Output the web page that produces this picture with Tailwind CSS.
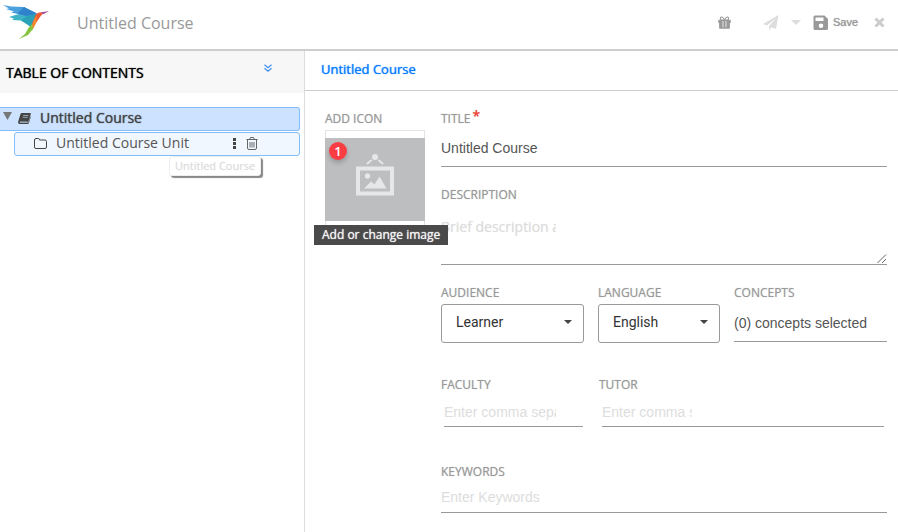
<!DOCTYPE html>
<html lang="en">
<head>
<meta charset="utf-8">
<meta name="viewport" content="width=device-width, initial-scale=1">
<title>Untitled Course</title>
<script src="https://cdn.jsdelivr.net/npm/@tailwindcss/browser@4"></script>
</head>
<body class="flex min-h-screen flex-col overflow-hidden bg-white font-['Open_Sans',sans-serif] text-[#444]">

<header class="flex items-center border-b-2 border-[#cecece] pr-[13px] pb-2">
  <a href="#" aria-label="Home" class="pt-[5px] pl-[3px]">
    <svg width="47" height="36" viewBox="0 0 47 36">
      <path d="M0 0 L8 1.500 L21 2 L33 8 L27 12 L20 10 L8 7.500 L11 6.500 L3 4 L6 3.500 Z" fill="#4a9fdd"/>
      <path d="M21 2 L33 8 L35 10 L24 12 L14 9 Z" fill="#2f83cd"/>
      <path d="M6 12 L14 9.500 L24 11 L34 9 L32 15 L29 21 L18 15.500 L9 15 L11 13.500 Z" fill="#3db3c6"/>
      <path d="M18 15.500 L24 11 L34 9 L31 17 L28 22 Z" fill="#2ba2b8"/>
      <path d="M33 9 L36 7.500 L41 7 L37 12 L33 18 L30 23 L29 19 Z" fill="#ee5a32"/>
      <path d="M31 15 L34 10 L33 18 L30 24 L27 26 Z" fill="#f58b2e"/>
      <path d="M29 19 L30 24 L25 30 L16 34 L22 29 L26 22 Z" fill="#86c440"/>
      <path d="M38 7.200 L46 6 L40 9.500Z" fill="#a9529e"/>
    </svg>
  </a>
  <h1 class="ml-[27px] flex-1 pt-1 text-base text-[#999]">Untitled Course</h1>
  <div class="flex items-center pt-1 text-[#999]">
    <button aria-label="Gift" class="mr-8">
      <svg width="13" height="13" viewBox="0 0 14 14" fill="currentColor"><path fill-rule="evenodd" d="M7 3.400C6.200 1.600 5.200.5 4 .5 2.600.5 2 1.400 2 2.300 2 3 2.300 3.600 2.800 4H1C.5 4 .3 4.200.3 4.700V7.600H1.200V12.800C1.200 13.300 1.500 13.600 2 13.600H12C12.500 13.600 12.800 13.300 12.800 12.800V7.600H13.700V4.700C13.700 4.200 13.500 4 13 4H11.200C11.700 3.600 12 3 12 2.300 12 1.400 11.400.5 10 .5 8.800.5 7.800 1.600 7 3.400ZM6 3.800H4.200C2.800 3.800 2.900 1.700 4.100 1.700 4.900 1.700 5.500 2.700 6 3.800ZM8 3.800H9.800C11.200 3.800 11.100 1.700 9.900 1.700 9.100 1.700 8.500 2.700 8 3.800ZM5 5.500H5.800V12H5ZM8.200 5.500H9V12H8.200Z"/></svg>
    </button>
    <button aria-label="Publish" class="mr-3 text-[#ddd]">
      <svg width="16" height="15" viewBox="0 0 16 15" fill="currentColor"><path d="M15.500 0 0 9 4 10.500 13 3.200 6 11.300V15L8.500 12.200 13 14Z"/></svg>
    </button>
    <button aria-label="Publish options" class="mr-3 text-[#ddd]">
      <svg width="10" height="5" viewBox="0 0 10 5" fill="currentColor"><path d="M0 0H10L5 5Z"/></svg>
    </button>
    <button class="flex items-center gap-1 font-['Liberation_Sans',sans-serif] text-[11px] [text-shadow:0_0_1px_#999]">
      <svg width="16" height="16" viewBox="0 0 16 16"><path fill="#999" fill-rule="evenodd" d="M2 .5H11.500L15 4V13.500A1.500 1.500 0 0 1 13.500 15H2A1.500 1.500 0 0 1 .5 13.500V2A1.500 1.500 0 0 1 2 .5ZM2.500 2.500V6H10.500V2.500ZM8 8.500A2.300 2.300 0 1 0 8 13.100 2.300 2.300 0 1 0 8 8.500Z"/></svg>
      Save
    </button>
    <button aria-label="Close" class="ml-4 text-[#ccc]">
      <svg width="11" height="11" viewBox="0 0 11 11" stroke="currentColor" stroke-width="3"><path d="M1.500 1.500 9.500 9.500M9.500 1.500 1.500 9.500"/></svg>
    </button>
  </div>
</header>

<div class="flex flex-1">
  <aside class="w-[305px] shrink-0 border-r border-[#ddd]">
    <div class="flex h-[42px] items-center justify-between bg-[#f7f7f7] pr-8 pl-[6px]">
      <h2 class="text-[14px] text-black [text-shadow:0_0_1px_#000]">TABLE OF CONTENTS</h2>
      <button aria-label="Collapse all" class="pb-2 text-[#3b8ff0]">
        <svg width="8" height="8" viewBox="0 0 8 8" fill="none" stroke="currentColor" stroke-width="1.200"><path d="M.5.8 4 3.800 7.500.8M.5 4.200 4 7.200 7.500 4.200"/></svg>
      </button>
    </div>
    <ul class="mt-[14px] mr-1 text-[14px] leading-5">
      <li>
        <div class="flex h-6 items-center rounded-r-[3px] border border-l-0 border-[#84bdfb] bg-[#cce2ff] pb-0.5 pl-[3px]">
          <button aria-label="Collapse course" class="pb-1"><svg width="9" height="8" viewBox="0 0 9 8" fill="#777"><path d="M0 0H9L4.500 8Z"/></svg></button>
          <svg class="ml-[6px]" width="13" height="11" viewBox="0 0 13 11"><path fill="#444" d="M4 0H12C12.800 0 13 .5 12.800 1.100L10.500 8.500C10.200 9.300 9.700 9.600 9 9.600H2C1.500 9.600 1.600 10 2 10H9.500C10 10 10.400 9.700 10.600 9.200L12.400 3.500 12.900 3.700 11 9.700C10.700 10.600 10.200 11 9.400 11H1.800C.6 11-.2 9.800.2 8.600L2.400 1.200C2.700.3 3.200 0 4 0Z"/><path d="M5.200 2.500H10.400M4.700 4.300H9.800M1.800 8.900H9.300" stroke="#cce2ff" stroke-width=".6"/></svg>
          <a href="#" class="ml-[9px] [text-shadow:0_0_1px_#444]">Untitled Course</a>
        </div>
        <ul class="pt-px pl-[14px]">
          <li class="relative">
            <div class="flex h-6 items-center rounded-[3px] border border-[#84bdfb] bg-[#f1f7ff] pb-0.5 pl-[19px] text-[#555]">
              <svg width="13" height="11" viewBox="0 0 13 11" fill="none" stroke="#444"><path d="M.5 9V2Q.5.5 2 .5H4.500Q5.500.5 5.500 2H11Q12.500 2 12.500 3.500V9Q12.500 10.500 11 10.500H2Q.5 10.500.5 9Z"/></svg>
              <a href="#" class="ml-[9px]">Untitled Course Unit</a>
              <button aria-label="Unit options" class="ml-auto"><svg width="4" height="11" viewBox="0 0 4 11" fill="#444"><path d="M0 0H3V3H0ZM0 4H3V7H0ZM0 8H3V11H0Z"/></svg></button>
              <button aria-label="Delete unit" class="mr-[41px] ml-[9px]"><svg width="12" height="13" viewBox="0 0 12 13" fill="none" stroke="#555"><path d="M.5 2.500H11.500M3.500 2.500 4.500.5H7.500L8.500 2.500M1.500 2.500V11Q1.500 12.500 3 12.500H9Q10.500 12.500 10.500 11V2.500M4 5V10.500M6 5V10.500M8 5V10.500" stroke-width=".9"/></svg></button>
            </div>
            <div role="tooltip" class="absolute top-6 left-[155px] rounded-[3px] border border-[#eee] bg-white px-[5px] text-[11px] leading-[18px] whitespace-nowrap text-[#ddd] shadow-[2px_2px_1px_#888] [text-shadow:0_0_1px_#e4e4e4]">Untitled Course</div>
          </li>
        </ul>
      </li>
    </ul>
  </aside>

  <main class="min-w-0 flex-1">
    <nav class="flex h-10 items-center border-b border-[#ccc] pb-0.5 pl-4 text-[13px] text-[#0a7cff]">
      <a href="#" class="[text-shadow:0_0_1px_#0a7cff]">Untitled Course</a>
    </nav>
    <form class="flex gap-4 pt-[19px] pr-[11px] pl-5 text-[12px] leading-[18px] text-[#999]">
      <section class="w-[100px] shrink-0">
        <h3 class="[text-shadow:0_0_1px_#bbb]">ADD ICON</h3>
        <div class="relative mt-[2px] border border-[#e4e4e4]">
          <button type="button" aria-label="Add or change image" aria-describedby="icon-tip" class="-mx-px my-[7px] flex h-[83px] w-[100px] justify-center bg-[#bcbec0] pt-[15px]">
            <svg width="40" height="44" viewBox="0 0 40 44"><circle cx="20" cy="4" r="3" fill="#e6e7e8"/><path d="M16 7.500 12.500 10.500M24 7.500 27.500 10.500" stroke="#e6e7e8" stroke-width="2" stroke-linecap="round"/><path d="M3 15.500H37V40.500H3Z" fill="none" stroke="#e6e7e8" stroke-width="4"/><circle cx="12.500" cy="23" r="2.700" fill="#e6e7e8"/><path d="M9 35.500 16 28.500 19.500 31.500 24.500 23.500 31.500 35.500Z" fill="#e6e7e8"/></svg>
          </button>
          <span class="absolute top-[11px] left-[3px] size-[18px] rounded-full bg-[#fb3e44] text-center text-[13px] font-semibold text-white shadow-[0_3px_5px_#0003]">1</span>
          <div id="icon-tip" role="tooltip" class="absolute top-[94px] -left-3 z-10 bg-[#4a4a4a] px-2 text-[12px] leading-5 font-medium whitespace-nowrap text-[#f4f4f4] [text-shadow:0_0_1px_#f4f4f4]">Add or change image</div>
        </div>
      </section>

      <div class="min-w-0 flex-1">
        <label for="title" class="flex [text-shadow:0_0_1px_#bbb]">TITLE<span class="ml-0.5 -mt-0.5 text-[14px] leading-4 font-semibold text-[#f44336]">*</span></label>
        <input id="title" type="text" value="Untitled Course" class="block h-[39px] w-full border-b border-[#999] pt-0.5 font-['Liberation_Sans',sans-serif] text-[14px] text-[#555] outline-none">

        <label for="desc" class="mt-[19px] block [text-shadow:0_0_1px_#bbb]">DESCRIPTION</label>
        <div class="flex items-end justify-between border-b border-[#999]">
          <textarea id="desc" wrap="off" placeholder="Brief description about the course" class="block h-[60px] w-[115px] resize-none overflow-hidden pt-[13px] text-[14px] leading-5 whitespace-nowrap outline-none [text-shadow:0_0_1px_#e4e4e4] placeholder:text-[#ddd]"></textarea>
          <svg width="10" height="10" viewBox="0 0 10 10" stroke="#555" stroke-width=".9"><path d="M.5 9 9 .5M5 9 9 5"/></svg>
        </div>

        <div class="mt-[19px] flex gap-[14px]">
          <div class="w-[143px]">
            <label for="audience" class="block [text-shadow:0_0_1px_#bbb]">AUDIENCE</label>
            <div class="relative mt-[2px]">
              <select id="audience" class="h-[39px] w-full appearance-none rounded-[3px] border border-[#999] pb-1 pl-[14px] font-[Roboto,sans-serif] text-[14px] text-[#333]"><option>Learner</option></select>
              <svg class="pointer-events-none absolute top-4 right-3" width="8" height="4" viewBox="0 0 8 4" fill="#444"><path d="M0 0H8L4 4Z"/></svg>
            </div>
          </div>
          <div class="w-[122px]">
            <label for="language" class="block [text-shadow:0_0_1px_#bbb]">LANGUAGE</label>
            <div class="relative mt-[2px]">
              <select id="language" class="h-[39px] w-full appearance-none rounded-[3px] border border-[#999] pb-1 pl-[14px] font-[Roboto,sans-serif] text-[14px] text-[#333]"><option>English</option></select>
              <svg class="pointer-events-none absolute top-4 right-3" width="8" height="4" viewBox="0 0 8 4" fill="#444"><path d="M0 0H8L4 4Z"/></svg>
            </div>
          </div>
          <div class="min-w-0 flex-1">
            <label for="concepts" class="block [text-shadow:0_0_1px_#bbb]">CONCEPTS</label>
            <input id="concepts" type="text" readonly value="(0) concepts selected" class="block h-10 w-full border-b border-[#999] pt-0.5 font-['Liberation_Sans',sans-serif] text-[14px] text-[#555] outline-none">
          </div>
        </div>

        <div class="mt-[33px] flex gap-4 pr-[3px]">
          <div class="w-[142px]">
            <label for="faculty" class="block [text-shadow:0_0_1px_#bbb]">FACULTY</label>
            <div class="ml-[3px] border-b border-[#999] pt-1">
              <input id="faculty" type="text" placeholder="Enter comma separated values" class="block h-7 w-[112px] font-['Liberation_Sans',sans-serif] text-[14px] outline-none placeholder:text-[#ddd]">
            </div>
          </div>
          <div class="min-w-0 flex-1">
            <label for="tutor" class="block [text-shadow:0_0_1px_#bbb]">TUTOR</label>
            <div class="ml-[3px] border-b border-[#999] pt-1">
              <input id="tutor" type="text" placeholder="Enter comma separated values" class="block h-7 w-[90px] font-['Liberation_Sans',sans-serif] text-[14px] outline-none placeholder:text-[#ddd]">
            </div>
          </div>
        </div>

        <label for="keywords" class="mt-9 block [text-shadow:0_0_1px_#bbb]">KEYWORDS</label>
        <input id="keywords" type="text" placeholder="Enter Keywords" class="block h-8 w-full border-b border-[#999] font-['Liberation_Sans',sans-serif] text-[14px] outline-none placeholder:text-[#ddd]">
      </div>
    </form>
  </main>
</div>
</body>
</html>
